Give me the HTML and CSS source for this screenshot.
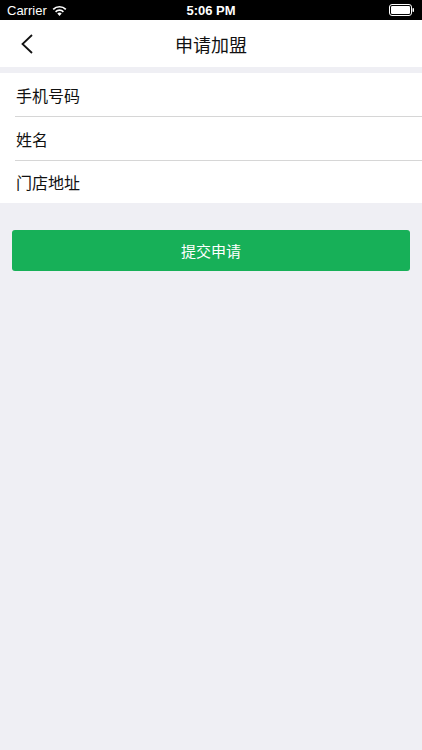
FILE: index.html
```html
<!DOCTYPE html>
<html lang="zh-CN">
<head>
    <meta charset="UTF-8">
    <meta name="viewport" content="width=device-width, initial-scale=1.0">
    <title>申请加盟</title>
    <link rel="stylesheet" href="styles.css">
</head>
<body>
    <div class="status-bar">
        <div class="status-left">
            <span>Carrier</span>
            <svg class="wifi" width="15" height="11" viewBox="0 0 15 11">
                <path d="M7.5 11 L5.3 8.6 A3.2 3.2 0 0 1 9.7 8.6 Z" fill="#fff"/>
                <path d="M3.6 6.8 A5.6 5.6 0 0 1 11.4 6.8" stroke="#fff" stroke-width="1.7" fill="none"/>
                <path d="M1.2 4.3 A9 9 0 0 1 13.8 4.3" stroke="#fff" stroke-width="1.7" fill="none"/>
            </svg>
        </div>
        <div class="status-time">5:06 PM</div>
        <div class="status-right">
            <svg width="26" height="12" viewBox="0 0 26 12">
                <rect x="0.5" y="0.5" width="22" height="11" rx="2.5" stroke="#fff" fill="none"/>
                <rect x="2" y="2" width="19" height="8" rx="1.2" fill="#fff"/>
                <rect x="23.5" y="4" width="1.5" height="4" rx="0.7" fill="#fff"/>
            </svg>
        </div>
    </div>

    <div class="nav-bar">
        <svg class="back" width="14" height="20" viewBox="0 0 14 20">
            <path d="M12 1 L2.5 10 L12 19" stroke="#111" stroke-width="1.8" fill="none"/>
        </svg>
        <h1>申请加盟</h1>
    </div>

    <form class="apply-form">
        <div class="field-list">
            <input type="tel" class="field" placeholder="手机号码">
            <input type="text" class="field" placeholder="姓名">
            <input type="text" class="field" placeholder="门店地址">
        </div>
        <button type="button" class="submit-btn">提交申请</button>
    </form>
</body>
</html>
```

FILE: styles.css
```css
body {
    margin: 0;
    background-color: #efeff4;
    font-family: "Noto Sans CJK SC", "Liberation Sans", sans-serif;
    color: #111;
}

.status-bar {
    height: 20px;
    background-color: #000;
    color: #fff;
    font-family: "Liberation Sans", sans-serif;
    font-size: 13px;
    display: flex;
    align-items: center;
    justify-content: space-between;
    padding: 0 7px;
    position: relative;
}

.status-left {
    display: flex;
    align-items: center;
    gap: 5px;
}

.status-time {
    position: absolute;
    left: 0;
    right: 0;
    text-align: center;
    font-weight: bold;
    pointer-events: none;
}

.status-right {
    display: flex;
    align-items: center;
}

.nav-bar {
    height: 47px;
    background-color: #fff;
    display: flex;
    align-items: center;
    position: relative;
}

.back {
    margin-left: 20px;
}

.nav-bar h1 {
    position: absolute;
    left: 0;
    right: 0;
    margin: 0;
    text-align: center;
    font-size: 18px;
    font-weight: normal;
    pointer-events: none;
}

.apply-form {
    padding-top: 6px;
}

.field-list {
    background-color: #fff;
    padding-left: 15px;
}

.field {
    display: block;
    width: 100%;
    height: 44px;
    box-sizing: border-box;
    border: none;
    border-bottom: 1px solid #d6d6d6;
    padding: 0 0 0 1px;
    font-family: inherit;
    font-size: 16px;
    background: transparent;
    outline: none;
}

.field:last-child {
    height: 42px;
    border-bottom: none;
}

.field::placeholder {
    color: #111;
}

.submit-btn {
    display: block;
    margin: 27px 12px 0;
    width: calc(100% - 24px);
    height: 41px;
    border: none;
    border-radius: 3px;
    background-color: #17b058;
    color: #fff;
    font-family: inherit;
    font-size: 15px;
    cursor: pointer;
}
```
